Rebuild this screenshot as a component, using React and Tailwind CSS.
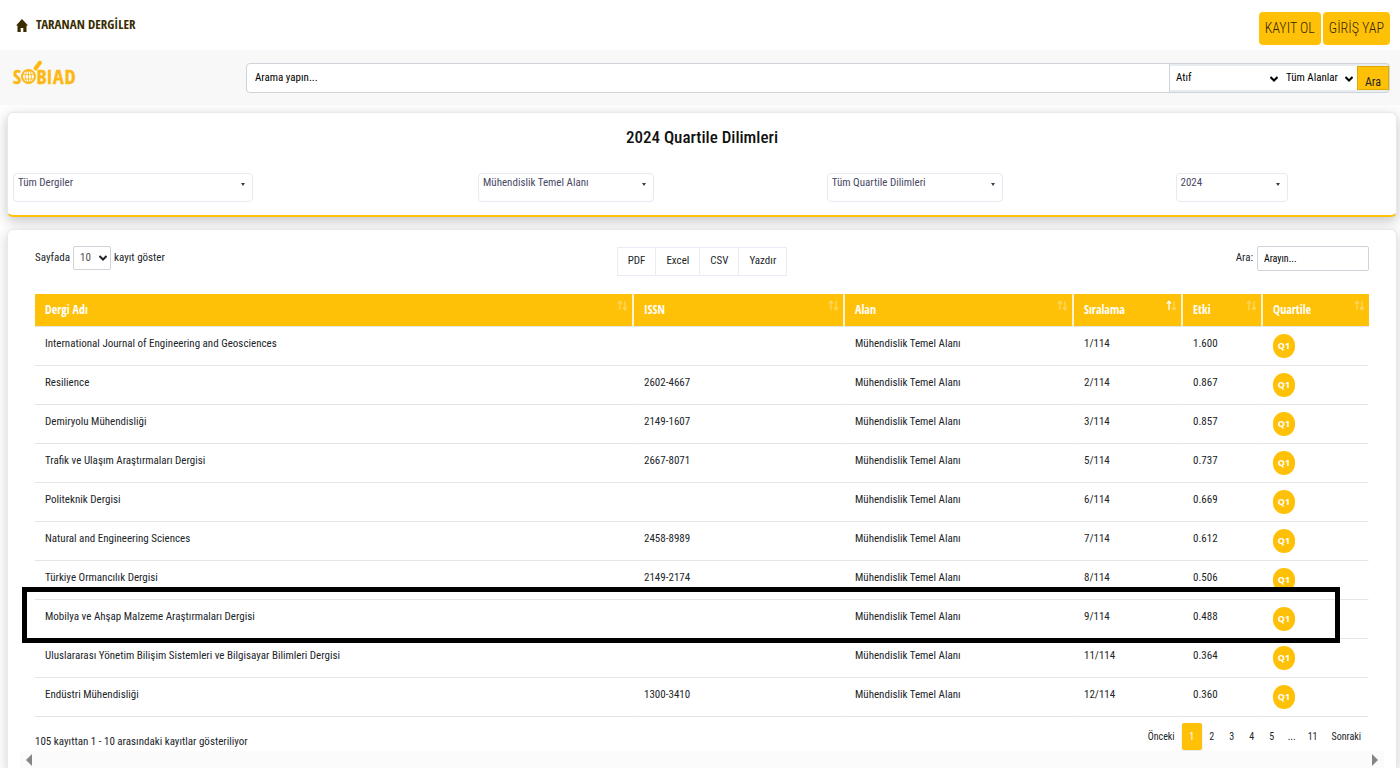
// src/pages/TarananDergiler.jsx
import React, { useState } from 'react';

const journals = [
  { name: 'International Journal of Engineering and Geosciences', issn: '', rank: '1/114', impact: '1.600' },
  { name: 'Resilience', issn: '2602-4667', rank: '2/114', impact: '0.867' },
  { name: 'Demiryolu Mühendisliği', issn: '2149-1607', rank: '3/114', impact: '0.857' },
  { name: 'Trafik ve Ulaşım Araştırmaları Dergisi', issn: '2667-8071', rank: '5/114', impact: '0.737' },
  { name: 'Politeknik Dergisi', issn: '', rank: '6/114', impact: '0.669' },
  { name: 'Natural and Engineering Sciences', issn: '2458-8989', rank: '7/114', impact: '0.612' },
  { name: 'Türkiye Ormancılık Dergisi', issn: '2149-2174', rank: '8/114', impact: '0.506' },
  { name: 'Mobilya ve Ahşap Malzeme Araştırmaları Dergisi', issn: '', rank: '9/114', impact: '0.488' },
  { name: 'Uluslararası Yönetim Bilişim Sistemleri ve Bilgisayar Bilimleri Dergisi', issn: '', rank: '11/114', impact: '0.364' },
  { name: 'Endüstri Mühendisliği', issn: '1300-3410', rank: '12/114', impact: '0.360' }
];

const columns = [
  { label: 'Dergi Adı', width: 'w-auto' },
  { label: 'ISSN', width: 'w-[211px]' },
  { label: 'Alan', width: 'w-[229px]' },
  { label: 'Sıralama', width: 'w-[109px]', sorted: true },
  { label: 'Etki', width: 'w-20' },
  { label: 'Quartile', width: 'w-[106px]' }
];

const filters = [
  { label: 'Dergiler', value: 'Tüm Dergiler', span: 'col-span-4', width: 'w-60' },
  { label: 'Temel Alan', value: 'Mühendislik Temel Alanı', span: 'col-span-3', width: 'w-44' },
  { label: 'Quartile', value: 'Tüm Quartile Dilimleri', span: 'col-span-3', width: 'w-44' },
  { label: 'Yıl', value: '2024', span: 'col-span-2', width: 'w-28' }
];

const pages = ['2', '3', '4', '5', '...', '11'];

function Logo() {
  return (
    <svg width="70" height="34" viewBox="0 0 70 34" fill="none" stroke="#fdb813">
      <text x="1 24.500 34.500 41 52.500" y="26" fill="#fdb813" stroke="#fdb813" strokeWidth="0.4" fontSize="20" fontWeight="700" fontFamily="'Open Sans Condensed', 'Open Sans', sans-serif">SBIAD</text>
      <circle cx="16.5" cy="18.500" r="6.5" strokeWidth="2" />
      <path d="M23.500 10.500L28 4.500" strokeWidth="4" strokeLinecap="round" />
      <path d="M16.500 12v13M11 16.500h11M11 21h11" strokeWidth="0.8" />
      <ellipse cx="16.5" cy="18.500" rx="3" ry="6" strokeWidth="0.8" />
    </svg>
  );
}

function Chevron({ className }) {
  return (
    <svg className={`pointer-events-none absolute ${className}`} width="8" height="6" viewBox="0 0 8 6" fill="none" stroke="currentColor" strokeWidth="2">
      <path d="M0.500 1L4 4.500L7.500 1" />
    </svg>
  );
}

function SortIcon({ sorted }) {
  return (
    <svg className="absolute top-1.5 right-1" width="11" height="11" viewBox="0 0 11 11" fill="none" stroke="#fff" strokeWidth="1.3">
      <path d="M3 10V1.500M1 3.500L3 1.200L5 3.500" opacity={sorted ? 1 : 0.35} />
      <path d="M8 1V9.500M6 7.500L8 9.800L10 7.500" opacity="0.35" />
    </svg>
  );
}

export default function App() {
  const [query, setQuery] = useState('');
  const [search, setSearch] = useState('');

  return (
    <div className="flex min-h-screen flex-col overflow-hidden bg-[#fdfdfd] font-['Roboto_Condensed','Roboto',sans-serif] text-[11px] text-[#212529]">
      <header className="flex h-[50px] items-center justify-between bg-white pr-2.5 pl-4">
        <a href="#" className="flex items-center gap-2 font-['Open_Sans_Condensed','Open_Sans',sans-serif] text-[13px] font-bold text-[#3a2c00]">
          <svg width="12" height="13" viewBox="0 0 12 13" fill="currentColor">
            <path d="M6 0L12 6.500H10.500V13H7.300V9H4.700V13H1.500V6.500H0Z" />
          </svg>
          TARANAN DERGİLER
        </a>
        <nav className="mt-1.5 flex gap-0.5 text-[14px] font-light text-[#332600]">
          <button type="button" className="h-[33px] rounded-sm bg-[#ffc107] px-1.5">KAYIT OL</button>
          <button type="button" className="h-[33px] rounded-sm bg-[#ffc107] px-1.5">GİRİŞ YAP</button>
        </nav>
      </header>

      <div className="flex h-[55px] shrink-0 items-start bg-[#f8f8f8] pr-2.5 pl-3">
        <a href="#" aria-label="SOBIAD" className="mt-2 w-[234px] shrink-0"><Logo /></a>
        <form className="mt-[13px] flex h-[30px] grow items-stretch rounded-sm border border-[#ced4da] bg-[#e9ecef] text-black" onSubmit={e => e.preventDefault()}>
          <input
            aria-label="Arama"
            placeholder="Arama yapın..."
            value={query}
            onChange={e => setQuery(e.target.value)}
            className="min-w-0 grow rounded-l-sm border-r border-[#ced4da] bg-white px-2 outline-none placeholder:text-black"
          />
          <div className="relative my-0.5 w-[110px]">
            <select aria-label="Arama türü" className="h-full w-full appearance-none bg-white pl-1.5 outline-none">
              <option>Atıf</option>
            </select>
            <Chevron className="top-2.5 right-0.5" />
          </div>
          <div className="relative my-0.5 w-[77px]">
            <select aria-label="Arama alanı" className="h-full w-full appearance-none bg-white pl-1.5 outline-none">
              <option>Tüm Alanlar</option>
            </select>
            <Chevron className="top-2.5 right-1" />
          </div>
          <button type="submit" className="my-0.5 w-8 border border-[#e0a800] bg-[#ffc107] pt-1.5 text-[12px] text-[#212529]">Ara</button>
        </form>
      </div>

      <section className="mt-[7px] mr-[3px] ml-[7px] rounded-md border border-b-2 border-[#e9e9e9] border-b-[#ffc107] bg-white px-[5px] pb-[13px] shadow-[0_4px_12px_rgba(0,0,0,0.22)]">
        <h1 className="pt-3 text-center text-[17px] leading-6 font-medium text-[#111]">2024 Quartile Dilimleri</h1>
        <div className="mt-6 -mr-[17px] grid grid-cols-12">
          {filters.map(f => (
            <div key={f.label} className={f.span}>
              <div className={`relative ${f.width}`}>
                <select aria-label={f.label} className="h-[29px] w-full appearance-none rounded-sm border border-[#e9e9f3] bg-white pb-2 pl-1 text-[#494965] outline-none">
                  <option>{f.value}</option>
                </select>
                <svg className="pointer-events-none absolute top-2.5 right-2" width="4" height="3" viewBox="0 0 4 3" fill="#3a3a50"><path d="M0 0H4L2 3Z" /></svg>
              </div>
            </div>
          ))}
        </div>
      </section>

      <section className="relative mt-3 mr-[3px] ml-[7px] flex grow flex-col rounded-t-md border border-b-0 border-[#e9e9e9] bg-white shadow-[0_4px_12px_rgba(0,0,0,0.18)]">
        <div className="px-[27px] pt-4">
          <div className="grid h-[30px] grid-cols-3 items-start">
            <label className="flex items-center gap-[3px]">
              Sayfada
              <span className="relative">
                <select className="h-6 w-[38px] appearance-none rounded-xs border border-[#ced4da] bg-white pl-1.5 text-[#495057] outline-none">
                  <option>10</option>
                </select>
                <Chevron className="top-[9px] right-1" />
              </span>
              kayıt göster
            </label>
            <div className="mt-px flex justify-center">
              {['PDF', 'Excel', 'CSV', 'Yazdır'].map(b => (
                <button key={b} type="button" className="-ml-px h-[29px] border border-[#ebebf5] bg-white px-2.5 first:ml-0">{b}</button>
              ))}
            </div>
            <label className="flex items-center justify-end gap-1">
              Ara:
              <input
                type="search"
                placeholder="Arayın..."
                value={search}
                onChange={e => setSearch(e.target.value)}
                className="h-[25px] w-28 rounded-xs border border-[#ced4da] bg-white px-1.5 text-[10px] outline-none placeholder:text-black"
              />
            </label>
          </div>

          <div className="relative mt-[18px]">
            <table className="w-full table-fixed border-separate border-spacing-0 text-left">
              <thead>
                <tr>
                  {columns.map(c => (
                    <th key={c.label} className={`relative h-[33px] border-r-2 border-b border-r-[#fff3cd] border-b-[#e4e5e7] bg-[#ffc107] px-2.5 font-['Open_Sans_Condensed','Open_Sans',sans-serif] text-[12px] font-bold text-white last:border-r-0 ${c.width}`}>
                      {c.label}
                      <SortIcon sorted={c.sorted} />
                    </th>
                  ))}
                </tr>
              </thead>
              <tbody className="leading-5 [&_td]:border-r [&_td]:border-b [&_td]:border-r-white [&_td]:border-b-[#e4e5e7] [&_td]:px-2.5 [&_td]:py-[7px] [&_td]:align-top">
                {journals.map(j => (
                  <tr key={j.name}>
                    <td>{j.name}</td>
                    <td>{j.issn}</td>
                    <td>Mühendislik Temel Alanı</td>
                    <td>{j.rank}</td>
                    <td>{j.impact}</td>
                    <td>
                      <span className="flex h-6 w-[22px] items-center justify-center rounded-full bg-[#ffc107] font-['Open_Sans',sans-serif] text-[9px] font-bold text-white">Q1</span>
                    </td>
                  </tr>
                ))}
              </tbody>
            </table>
            {/* highlighted journal */}
            <div className="pointer-events-none absolute top-[293px] right-[29px] -left-[13px] h-14 border-5 border-black" />
          </div>

          <div className="flex items-start justify-between pt-1.5">
            <p className="pt-[11px] leading-4">105 kayıttan 1 - 10 arasındaki kayıtlar gösteriliyor</p>
            <nav className="flex h-[27px] items-center pr-2 text-[10px]">
              <a href="#" className="mr-[7px]">Önceki</a>
              <a href="#" className="flex h-full w-5 items-center justify-center rounded-xs bg-[#ffc107] text-white shadow-sm">1</a>
              {pages.map(p => (
                <a key={p} href="#" className="min-w-5 px-1.5 text-center">{p}</a>
              ))}
              <a href="#" className="ml-2">Sonraki</a>
            </nav>
          </div>
        </div>
        <div className="mx-3 mt-px flex h-[17px] items-center justify-between bg-[#fbfbfb] px-1.5">
          <svg width="6" height="12" viewBox="0 0 6 12" fill="#858585"><path d="M6 0V12L0 6Z" /></svg>
          <svg width="6" height="12" viewBox="0 0 6 12" fill="#858585"><path d="M0 0V12L6 6Z" /></svg>
        </div>
      </section>
    </div>
  );
}
